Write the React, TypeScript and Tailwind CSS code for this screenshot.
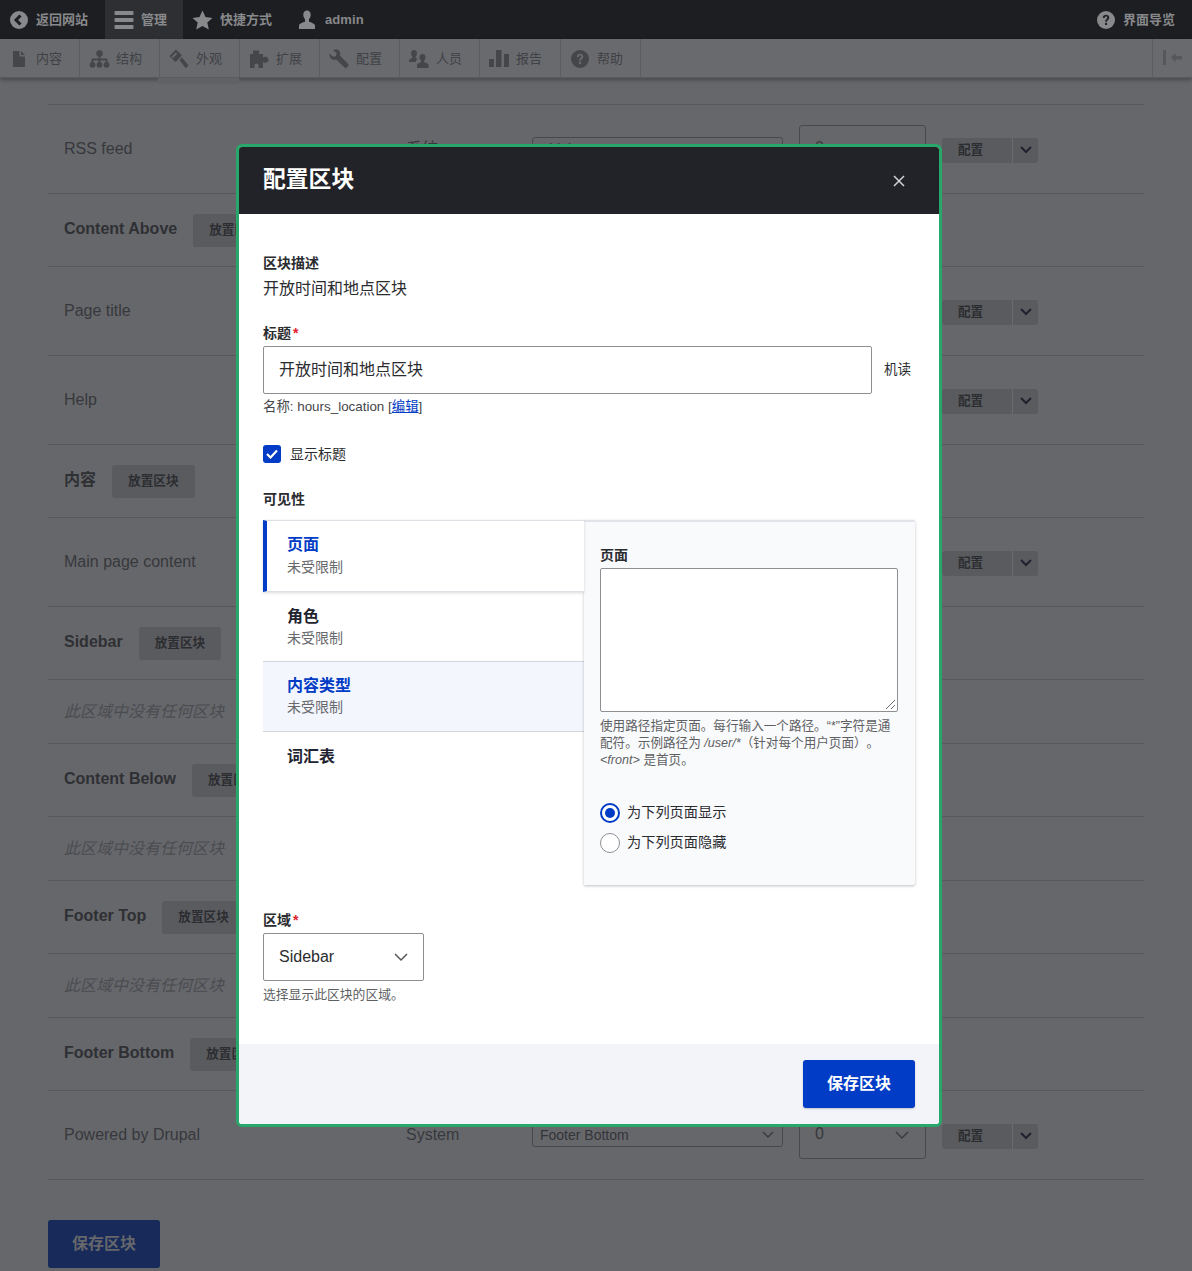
import React from 'react';

const SANS = 'font-["Liberation_Sans","Noto_Sans_CJK_SC",sans-serif]';

function IconFile() {
  return (
    <svg width="16" height="18" viewBox="0 0 16 18" fill="currentColor">
      <path d="M2 1h6.500v5.500H14V17H2z" />
      <path d="M10 1l4 4h-4z" />
    </svg>
  );
}

function IconSitemap() {
  return (
    <svg width="21" height="18" viewBox="0 0 21 18" fill="currentColor">
      <circle cx="10.500" cy="3.500" r="3.200" />
      <rect x="9.500" y="5" width="2" height="6" />
      <rect x="3" y="8.500" width="15" height="2" />
      <rect x="2.500" y="9" width="2" height="4" />
      <rect x="16.500" y="9" width="2" height="4" />
      <rect x="9.500" y="9" width="2" height="4" />
      <circle cx="3.500" cy="14.800" r="2.900" />
      <circle cx="10.500" cy="14.800" r="2.900" />
      <circle cx="17.500" cy="14.800" r="2.900" />
    </svg>
  );
}

function IconHammer() {
  return (
    <svg width="20" height="20" viewBox="0 0 20 20" fill="currentColor">
      <path d="M7 0.500L0.500 7l6 6L13 6.500zM7 3.500l1.200 1.200-4.300 4.300L2.700 7.800z" fillRule="evenodd" />
      <path d="M10.500 11l2.500-2.500 6.500 8-2.800 2.800z" />
    </svg>
  );
}

function IconPuzzle() {
  return (
    <svg width="21" height="20" viewBox="0 0 21 20" fill="currentColor">
      <path d="M1 5h3V1.500h6V5h4v3.600c1-.9 2-1 3-.8 1.600.4 2.500 1.500 2.500 3s-1 2.700-2.500 3c-1 .2-2 0-3-.8V19H9.500v-2.500c0-1.200-1-2-2-2s-2 .8-2 2V19H1z" />
    </svg>
  );
}

function IconWrench() {
  return (
    <svg width="20" height="20" viewBox="0 0 20 20" fill="currentColor">
      <path d="M6.500.5c2.600-.4 5 1.700 4.700 4.500-.1.500-.2 1-.4 1.400l8 8.200c.9.900.9 2 .1 2.800l-.9.900c-.8.800-2 .8-2.800-.1L7.300 10.600c-2.800 1-6.200-1-6.800-4.200-.1-.6-.1-1.200 0-1.800l3.400 3.200 3-.6.700-3L4.100 1.100c.7-.3 1.500-.5 2.400-.6z" />
    </svg>
  );
}

function IconPeople() {
  return (
    <svg width="20" height="20" viewBox="0 0 20 20" fill="currentColor">
      <path d="M5 1c2 0 3 1.400 3 3.300 0 1.500-.6 2.600-1.300 3.300v1.300c.8.300 1.500.6 2.100 1-1.400.7-2.100 1.800-2.300 3.100H0v-1.500c0-1.300 1.800-2.100 3.300-2.600V7.600C2.600 6.900 2 5.800 2 4.300 2 2.400 3 1 5 1z" />
      <path d="M13.500 5c2 0 3 1.400 3 3.300 0 1.500-.6 2.600-1.300 3.300v1.700c2 .6 4.300 1.300 4.300 2.800V19H8v-2.900c0-1.500 2.300-2.200 4-2.800v-1.700c-.7-.7-1.500-1.800-1.500-3.300 0-1.900 1-3.300 3-3.300z" />
    </svg>
  );
}

function IconBars() {
  return (
    <svg width="20" height="19" viewBox="0 0 20 19" fill="currentColor">
      <rect x="0" y="10" width="5" height="8" />
      <rect x="7" y="1" width="5.500" height="17" />
      <rect x="15" y="5" width="5" height="13" />
    </svg>
  );
}

function IconHelp({ mark = '#232428' }: { mark?: string }) {
  return (
    <svg width="18" height="18" viewBox="0 0 18 18">
      <circle cx="9" cy="9" r="9" fill="currentColor" />
      <path d="M5.800 7c0-2 1.400-3.200 3.300-3.200S12.300 5 12.300 6.700c0 2.200-2.300 2.400-2.300 4.100H8c0-2.600 2.200-2.900 2.200-4.100 0-.7-.5-1.100-1.100-1.100-.7 0-1.200.5-1.300 1.400z" fill={mark} />
      <rect x="8" y="11.800" width="2.100" height="2.200" fill={mark} />
    </svg>
  );
}

const menu = [
  { label: '内容', icon: <IconFile /> },
  { label: '结构', icon: <IconSitemap /> },
  { label: '外观', icon: <IconHammer /> },
  { label: '扩展', icon: <IconPuzzle /> },
  { label: '配置', icon: <IconWrench /> },
  { label: '人员', icon: <IconPeople /> },
  { label: '报告', icon: <IconBars /> },
  { label: '帮助', icon: <IconHelp mark="#696a6e" /> },
];

function Toolbar() {
  return (
    <div>
      <div className="h-[39px] bg-[#1d1e22] flex items-center text-[#88898b] text-[13px] font-bold whitespace-nowrap">
        <div className="flex items-center h-full pl-[10px] gap-[8px] w-[105px]">
          <svg width="18" height="18" viewBox="0 0 18 18">
            <circle cx="9" cy="9" r="9" fill="#88898b" />
            <path d="M10.500 4.500L6 9l4.500 4.500" fill="none" stroke="#1d1e22" strokeWidth="3" />
          </svg>
          <span>返回网站</span>
        </div>
        <div className="flex items-center h-full w-[78px] bg-[#2e2f33] pl-[9px] gap-[6px]">
          <svg width="21" height="20" viewBox="0 0 21 20" fill="#88898b">
            <rect x="0.500" y="1" width="19" height="4" rx="1" />
            <rect x="0.500" y="8" width="19" height="4" rx="1" />
            <rect x="0.500" y="15" width="19" height="4" rx="1" />
          </svg>
          <span>管理</span>
        </div>
        <div className="flex items-center h-full pl-[9px] w-[105px] gap-[7px]">
          <svg width="21" height="20" viewBox="0 0 21 20" fill="#88898b">
            <path d="M10.500 0.500l3 6.600 7 .8-5.200 4.700 1.500 7-6.300-3.600-6.300 3.600 1.500-7L.5 7.900l7-.8z" />
          </svg>
          <span>快捷方式</span>
        </div>
        <div className="flex items-center h-full gap-[8px] pl-[9px]">
          <svg width="20" height="20" viewBox="0 0 20 20" fill="#88898b">
            <path d="M10 .5c2.500 0 3.700 1.800 3.700 4.300 0 2-.8 3.500-1.700 4.400v2.500c2.200.7 6 1.900 6 3.800v3.500H2v-3.500c0-1.900 3.800-3.100 6-3.800V9.200C7.100 8.300 6.300 6.800 6.300 4.800 6.300 2.300 7.500.5 10 .5z" />
          </svg>
          <span className="tracking-[0.1px]">admin</span>
        </div>
        <div className="ml-auto flex items-center gap-[8px] pr-[17px]">
          <IconHelp />
          <span>界面导览</span>
        </div>
      </div>
      <div className="relative h-[39px] bg-[#696a6e] flex border-b border-[#5a5b5f] shadow-[0_2px_4px_rgba(0,0,0,0.3)] text-[13px]">
        {menu.map((m, i) => (
          <div
            key={m.label}
            className={`flex items-center border-r border-[#5c5d61] h-full pt-[1px] ${i === 6 ? 'w-[81px]' : 'w-[80px]'}`}
          >
            <div className="w-[36px] flex justify-center items-center text-[#454649] pl-[2px]">{m.icon}</div>
            <span className="text-[#404145]">{m.label}</span>
          </div>
        ))}
        <div className="ml-auto w-[40px] border-l border-[#5c5d61] flex items-center justify-center text-[#56575b]">
          <svg width="20" height="16" viewBox="0 0 20 16" fill="currentColor">
            <rect x="0" y="0" width="3" height="15" />
            <path d="M8 7.500L12.500 3v3H19v3.500h-6.500v3z" />
          </svg>
        </div>
        <div className="absolute left-[158px] top-[39px] w-[81px] h-[6px] bg-[#616266] rounded-b-[2px]" />
      </div>
    </div>
  );
}

function PlaceButton() {
  return (
    <button className="ml-[16px] h-[33px] px-[16px] pt-[1px] bg-[#5a5b5f] rounded-[3px] text-[#2c2d31] text-[12.64px] font-bold whitespace-nowrap">
      放置区块
    </button>
  );
}

function RegionRow({ name, height }: { name: string; height: number }) {
  return (
    <div className="flex items-center border-b border-[#57585c] px-[16px]" style={{ height }}>
      <span className="text-[16px] font-bold text-[#2f3034] -mt-[2px]">{name}</span>
      <PlaceButton />
    </div>
  );
}

function EmptyRow() {
  return (
    <div className="flex items-center border-b border-[#57585c] px-[16px] h-[64px] text-[16px] italic text-[#4b4c50]">
      此区域中没有任何区块
    </div>
  );
}

function BlockRow({ name, category, region }: { name: string; category: string; region: string }) {
  return (
    <div className="flex items-center border-b border-[#57585c] h-[89px] pl-[16px] text-[16px] text-[#37383c]">
      <div className="w-[342px]">{name}</div>
      <div className="w-[126px]">{category}</div>
      <div className="w-[251px] h-[24px] border border-[#48494d] rounded-[3px] pl-[7px] text-[14px] leading-[22px] flex items-center justify-between pr-[8px] text-[#333438]">
        <span>{region}</span>
        <svg width="12" height="8" viewBox="0 0 12 8" fill="none" stroke="#3a3b3f" strokeWidth="1.500">
          <path d="M1 1l5 5 5-5" />
        </svg>
      </div>
      <div className="ml-[16px] w-[127px] h-[48px] border border-[#48494d] rounded-[3px] pl-[15px] pr-[16px] flex items-center justify-between">
        <span className="-mt-[2px]">0</span>
        <svg width="14" height="9" viewBox="0 0 14 9" fill="none" stroke="#3a3b3f" strokeWidth="1.500">
          <path d="M1 1l6 6 6-6" />
        </svg>
      </div>
      <div className="ml-[16px] mt-[2px] w-[96px] h-[25px] bg-[#5a5b5f] rounded-[3px] flex text-[12.64px] font-bold text-[#2c2d31]">
        <div className="w-[71px] flex items-center pl-[16px] border-r border-[#6a6b6f]">配置</div>
        <div className="flex-1 flex items-center justify-center">
          <svg width="12" height="8" viewBox="0 0 12 8" fill="none" stroke="#20222e" strokeWidth="2">
            <path d="M1 1l5 5 5-5" />
          </svg>
        </div>
      </div>
    </div>
  );
}

function BlockPage() {
  return (
    <div className="px-[48px] pt-[26px]">
      <div className="border-t border-[#57585c] w-[1096px]">
        <BlockRow name="RSS feed" category="系统" region="Sidebar" />
        <RegionRow name="Content Above" height={73} />
        <BlockRow name="Page title" category="Core" region="Content Above" />
        <BlockRow name="Help" category="Help" region="Content Above" />
        <RegionRow name="内容" height={73} />
        <BlockRow name="Main page content" category="System" region="内容" />
        <RegionRow name="Sidebar" height={73} />
        <EmptyRow />
        <RegionRow name="Content Below" height={73} />
        <EmptyRow />
        <RegionRow name="Footer Top" height={73} />
        <EmptyRow />
        <RegionRow name="Footer Bottom" height={73} />
        <BlockRow name="Powered by Drupal" category="System" region="Footer Bottom" />
      </div>
      <button className="mt-[40px] w-[112px] h-[48px] bg-[#182a5a] rounded-[3px] text-[16px] font-bold text-[#66676b]">
        保存区块
      </button>
    </div>
  );
}

function Tab({
  title,
  sub,
  selected,
  hover,
}: {
  title: string;
  sub?: string;
  selected?: boolean;
  hover?: boolean;
}) {
  const bg = selected
    ? 'pt-[13px] bg-white border-l-[4px] border-l-[#003cc5] pl-[20px] border-y border-y-[#dedfe4] shadow-[0_1px_3px_rgba(0,0,0,0.15)] w-[321px] h-[72px] relative z-10'
    : hover
      ? 'pt-[13px] bg-[#f3f6fd] pl-[24px] border-b border-b-[#d3d4d9] border-t border-t-[#d3d4d9] h-[71px]'
      : 'pt-[14px] bg-white pl-[24px] h-[69px]';
  return (
    <div className={bg}>
      <div className={`text-[16px] leading-[22px] font-bold ${selected || hover ? 'text-[#003cc5]' : 'text-[#222330]'}`}>
        {title}
      </div>
      {sub && (
        <div className={`text-[14px] leading-[20px] text-[#68696d] ${selected ? 'mt-[1px]' : ''}`}>{sub}</div>
      )}
    </div>
  );
}

function Radio({ label, checked }: { label: string; checked?: boolean }) {
  return (
    <div className="flex items-center gap-[7px] h-[20px] text-[14.2px] text-[#2b2c30]">
      {checked ? (
        <span className="w-[20px] h-[20px] rounded-full border-[2px] border-[#003cc5] bg-white flex items-center justify-center">
          <span className="w-[10px] h-[10px] rounded-full bg-[#003cc5]" />
        </span>
      ) : (
        <span className="w-[20px] h-[20px] rounded-full border border-[#8e8f93] bg-white" />
      )}
      <span>{label}</span>
    </div>
  );
}

function Modal() {
  return (
    <div className="absolute left-[236px] top-[144px] w-[706px] h-[983px] border-[3px] border-[#27a86a] rounded-[6px] bg-white overflow-hidden flex flex-col">
      <div className="h-[67px] shrink-0 bg-[#222328] flex items-center justify-between pl-[24px] pr-[34px]">
        <h1 className="text-[22.8px] font-bold text-white leading-none -mt-[3px]">配置区块</h1>
        <svg width="12" height="12" viewBox="0 0 12 12" stroke="#d4d4d8" strokeWidth="1.500">
          <path d="M1 1l10 10M11 1L1 11" />
        </svg>
      </div>

      <div className="flex-1 px-[24px] pt-[39px] text-[#2b2c30]">
        <div className="text-[14px] font-bold leading-[20px]">区块描述</div>
        <div className="text-[16px] leading-[24px] mt-[4px]">开放时间和地点区块</div>

        <div className="text-[14px] font-bold leading-[20px] mt-[22px]">
          标题<span className="text-[#e0202d] ml-[2px]">*</span>
        </div>
        <div className="flex items-center mt-[3px]">
          <div className="w-[609px] h-[48px] border border-[#8e8f93] rounded-[2px] pl-[15px] flex items-center text-[16px]">
            开放时间和地点区块
          </div>
          <span className="ml-[12px] text-[13.5px] text-[#2b2c30]">机读</span>
        </div>
        <div className="text-[13.4px] leading-[18px] mt-[4px] text-[#45464a]">
          名称: hours_location [<span className="text-[#003cc5] underline">编辑</span>]
        </div>

        <div className="flex items-center gap-[9px] mt-[28px] h-[20px]">
          <span className="w-[18px] h-[18px] rounded-[3px] bg-[#003cc5] flex items-center justify-center">
            <svg width="12" height="10" viewBox="0 0 12 10" fill="none" stroke="#fff" strokeWidth="2.200">
              <path d="M1 5l3.500 3.500L11 1.500" />
            </svg>
          </span>
          <span className="text-[14px]">显示标题</span>
        </div>

        <div className="text-[14px] font-bold leading-[20px] mt-[25px]">可见性</div>

        <div className="flex mt-[11px] w-[652px] relative">
          <div className="w-[321px] shrink-0">
            <Tab title="页面" sub="未受限制" selected />
            <Tab title="角色" sub="未受限制" />
            <Tab title="内容类型" sub="未受限制" hover />
            <Tab title="词汇表" />
          </div>
          <div className="w-[331px] h-[365px] bg-[#f9fafc] border-t-[2px] border-t-[#e2e3e8] shadow-[0_1px_3px_rgba(0,0,0,0.25)] rounded-r-[2px] pl-[16px] pr-[16px] pt-[24px]">
            <div className="text-[14px] font-bold leading-[18px]">页面</div>
            <div className="relative w-[298px] h-[144px] border border-[#8e8f93] rounded-[2px] bg-white mt-[4px]">
              <svg width="12" height="12" viewBox="0 0 12 12" stroke="#6b6c70" className="absolute right-[1px] bottom-[1px]">
                <path d="M2 11l9-9M7 11l4-4" />
              </svg>
            </div>
            <div className="text-[12.6px] leading-[17px] mt-[6px] text-[#5e5f63] w-[298px] [text-spacing-trim:space-all]">
              使用路径指定页面。每行输入一个路径。“*”字符是通配符。示例路径为 <em>/user/*</em>（针对每个用户页面）。<em>&lt;front&gt;</em> 是首页。
            </div>
            <div className="mt-[34px] flex flex-col gap-[10px]">
              <Radio label="为下列页面显示" checked />
              <Radio label="为下列页面隐藏" />
            </div>
          </div>
        </div>

        <div className="text-[14px] font-bold leading-[20px] mt-[25px]">
          区域<span className="text-[#e0202d] ml-[2px]">*</span>
        </div>
        <div className="mt-[3px] w-[161px] h-[48px] border border-[#8e8f93] rounded-[2px] pl-[15px] pr-[15px] flex items-center justify-between text-[16px]">
          <span>Sidebar</span>
          <svg width="14" height="9" viewBox="0 0 14 9" fill="none" stroke="#55565a" strokeWidth="1.500">
            <path d="M1 1l6 6 6-6" />
          </svg>
        </div>
        <div className="text-[12.8px] leading-[18px] mt-[5px] text-[#5e5f63]">选择显示此区块的区域。</div>
      </div>

      <div className="h-[80px] shrink-0 bg-[#f3f4f9] flex items-start justify-end pt-[16px] pr-[24px]">
        <button className="w-[112px] h-[48px] bg-[#003cc5] rounded-[3px] text-white text-[16px] font-bold shadow-[0_1px_2px_rgba(0,0,0,0.2)]">
          保存区块
        </button>
      </div>
    </div>
  );
}

export default function App() {
  return (
    <div className={`relative h-[1271px] overflow-hidden bg-[#66676b] ${SANS}`}>
      <Toolbar />
      <BlockPage />
      <Modal />
    </div>
  );
}
